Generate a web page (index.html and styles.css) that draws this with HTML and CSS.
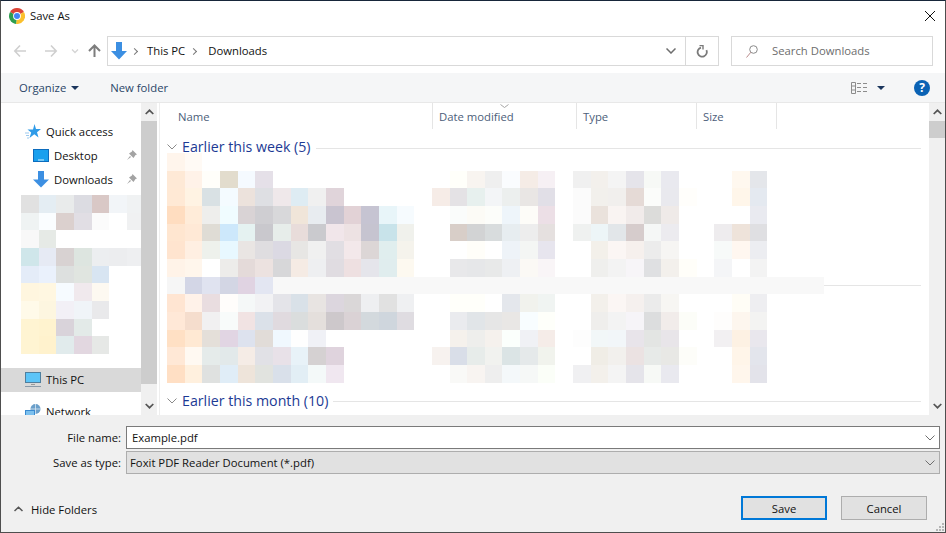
FILE: index.html
```html
<!DOCTYPE html>
<html lang="en">
<head>
    <meta charset="UTF-8">
    <title>Save As</title>
    <link rel="stylesheet" href="styles.css">
</head>

<body>
<div class="window">

    <header class="titlebar">
        <svg class="app-icon" width="16" height="16" viewBox="0 0 16 16">
            <path d="M8 8L1.07 4A8 8 0 0 1 14.93 4Z" fill="#db4437"/>
            <path d="M8 8L14.93 4A8 8 0 0 1 7 15.94Z" fill="#fbc02d"/>
            <path d="M8 8L7 15.94A8 8 0 0 1 1.07 4Z" fill="#2e9e4f"/>
            <circle cx="8" cy="8" r="3.9" fill="#fff"/>
            <circle cx="8" cy="8" r="3" fill="#4285f4"/>
        </svg>
        <span class="title">Save As</span>
        <svg class="close-icon" width="10" height="10" viewBox="0 0 10 10">
            <path d="M0 0L10 10M10 0L0 10" stroke="#111" stroke-width="1" fill="none"/>
        </svg>
    </header>

    <div class="navbar">
        <svg class="nav-arrows" width="100" height="30" viewBox="0 0 100 30" fill="none">
            <path d="M8 15H19M13 9.500L7.800 15L13 20.500" stroke="#cfcfcf" stroke-width="1.600"/>
            <path d="M38 15H49M44 9.500L49.200 15L44 20.500" stroke="#cfcfcf" stroke-width="1.600"/>
            <path d="M65 13.500L68 16.500L71 13.500" stroke="#d4d4d4" stroke-width="1.300"/>
            <path d="M87.500 21V10M82 15L87.500 9.500L93 15" stroke="#7d7d7d" stroke-width="2"/>
        </svg>
        <div class="address">
            <svg class="addr-icon" width="16" height="18" viewBox="0 0 16 18">
                <path d="M5 0H11V9H16L8 17.500L0 9H5Z" fill="#3c8fe2"/>
            </svg>
            <span class="crumb-sep"></span>
            <span class="crumb">This PC</span>
            <span class="crumb-sep"></span>
            <span class="crumb">Downloads</span>
            <svg class="addr-chevron" width="10" height="6" viewBox="0 0 10 6" fill="none">
                <path d="M0.500 0.500L5 5L9.500 0.500" stroke="#6e6e6e" stroke-width="1.500"/>
            </svg>
            <div class="refresh">
                <svg width="12" height="13" viewBox="0 0 12 13" fill="none">
                    <path d="M3 3.500A4.600 4.600 0 1 0 9 3.500" stroke="#7a7a7a" stroke-width="1.800" transform="rotate(25 6 7.500)"/>
                    <path d="M3.500 0.500L7 0.500L7 4.500" stroke="#7a7a7a" stroke-width="1.400"/>
                </svg>
            </div>
        </div>
        <div class="search">
            <svg width="12" height="13" viewBox="0 0 12 13" fill="none">
                <circle cx="7.500" cy="4.500" r="3.800" stroke="#8a8a8a"/>
                <path d="M4.800 7.300L0.500 12.500" stroke="#b98a8a"/>
            </svg>
            <span>Search Downloads</span>
        </div>
    </div>

    <div class="toolbar">
        <span class="tool">Organize</span>
        <span class="caret"></span>
        <span class="tool new-folder">New folder</span>
        <svg class="view-icon" width="16" height="12" viewBox="0 0 16 12" fill="none">
            <path d="M0.500 0.500H4.500V11.500H0.500ZM0.500 4H4.500M0.500 8H4.500" stroke="#8c8c8c"/>
            <path d="M6 1.500H10M12 1.500H16M6 5.500H10M12 5.500H16M6 9.500H10M12 9.500H16" stroke="#8c8c8c"/>
        </svg>
        <span class="caret view-caret"></span>
        <span class="help">?</span>
    </div>

    <main class="panes">
        <nav class="sidebar">
            <div class="side-item side-top">
                <svg width="16" height="15" viewBox="0 0 16 15">
                    <path d="M9.500 0L11 5H16L12 8.200L13.500 13.500L9.300 10.300L4.500 14L6.200 8.500L2.500 5.500H8Z" fill="#2f9be8"/>
                    <path d="M0 9H4M1 11.500H4M2 14H4" stroke="#9cc9ee" stroke-width="1"/>
                </svg>
                <span>Quick access</span>
            </div>
            <div class="side-item side-sub">
                <svg width="16" height="13" viewBox="0 0 16 13">
                    <rect x="0.500" y="0.500" width="15" height="12" fill="#19a0ee" stroke="#0c6cbd"/>
                    <path d="M5 11H11" stroke="#d5eefc"/>
                </svg>
                <span>Desktop</span>
                <svg class="pin" width="10" height="10" viewBox="0 0 10 10">
                    <path d="M5.500 0L10 4.500L8.500 5L6.500 8L2 3.500L5 1.500ZM3 6L0 10L4 7Z" fill="#a3a3a3"/>
                </svg>
            </div>
            <div class="side-item side-sub">
                <svg width="16" height="17" viewBox="0 0 16 17">
                    <path d="M5 0H11V8.500H16L8 16.500L0 8.500H5Z" fill="#3c8fe2"/>
                </svg>
                <span>Downloads</span>
                <svg class="pin" width="10" height="10" viewBox="0 0 10 10">
                    <path d="M5.500 0L10 4.500L8.500 5L6.500 8L2 3.500L5 1.500ZM3 6L0 10L4 7Z" fill="#a3a3a3"/>
                </svg>
            </div>
            <div class="mosaic mosaic-side" id="sideMosaic"></div>
            <div class="side-item side-top side-active">
                <svg width="16" height="15" viewBox="0 0 16 15">
                    <rect x="0.500" y="0.500" width="15" height="10" fill="#5cc4f7" stroke="#4f7f9e"/>
                    <path d="M0 14.500H16" stroke="#8a9aa8"/>
                    <path d="M6 12.500H10" stroke="#9a9a9a"/>
                </svg>
                <span>This PC</span>
            </div>
            <div class="side-item side-top side-network">
                <svg width="16" height="16" viewBox="0 0 16 16">
                    <circle cx="10.500" cy="5" r="5" fill="#6a9fca"/>
                    <path d="M10.500 0V10M5.500 5H15.500" stroke="#dbe8f2" stroke-width="0.800"/>
                    <rect x="0" y="6" width="10" height="7" fill="#3a8ad0"/>
                    <rect x="1" y="7" width="8" height="5" fill="#7cc0ee"/>
                </svg>
                <span>Network</span>
            </div>
        </nav>

        <div class="scrollbar">
            <div class="sb-btn">
                <svg width="9" height="6" viewBox="0 0 9 6" fill="none"><path d="M0.700 5L4.500 1.300L8.300 5" stroke="#555" stroke-width="1.700"/></svg>
            </div>
            <div class="sb-thumb sb-thumb-side"></div>
            <div class="sb-track"></div>
            <div class="sb-btn">
                <svg width="9" height="6" viewBox="0 0 9 6" fill="none"><path d="M0.700 1L4.500 4.700L8.300 1" stroke="#555" stroke-width="1.700"/></svg>
            </div>
        </div>

        <section class="files">
            <div class="columns">
                <div class="col col-name">Name</div>
                <div class="col col-date">Date modified
                    <svg class="sort" width="9" height="4" viewBox="0 0 9 4" fill="none"><path d="M0.500 0.500L4.500 3.500L8.500 0.500" stroke="#a5a5a5"/></svg>
                </div>
                <div class="col col-type">Type</div>
                <div class="col col-size">Size</div>
            </div>

            <div class="group group-first">
                <svg width="10" height="6" viewBox="0 0 10 6" fill="none"><path d="M0.500 0.500L5 5L9.500 0.500" stroke="#8a8a8a"/></svg>
                <span>Earlier this week (5)</span>
                <i></i>
            </div>
            <div class="mosaic-wrap">
                <div class="mosaic mosaic-files" id="fileMosaic">
                    <div class="mosaic-strip"></div>
                </div>
                <div class="strip-line"></div>
            </div>
            <div class="group group-next">
                <svg width="10" height="6" viewBox="0 0 10 6" fill="none"><path d="M0.500 0.500L5 5L9.500 0.500" stroke="#8a8a8a"/></svg>
                <span>Earlier this month (10)</span>
                <i></i>
            </div>
        </section>

        <div class="scrollbar">
            <div class="sb-btn">
                <svg width="9" height="6" viewBox="0 0 9 6" fill="none"><path d="M0.700 5L4.500 1.300L8.300 5" stroke="#555" stroke-width="1.700"/></svg>
            </div>
            <div class="sb-thumb sb-thumb-files"></div>
            <div class="sb-track"></div>
            <div class="sb-btn">
                <svg width="9" height="6" viewBox="0 0 9 6" fill="none"><path d="M0.700 1L4.500 4.700L8.300 1" stroke="#555" stroke-width="1.700"/></svg>
            </div>
        </div>
    </main>

    <footer class="footer">
        <div class="form">
            <label>File name:</label>
            <div class="field field-input">
                <span>Example.pdf</span>
                <svg width="10" height="6" viewBox="0 0 10 6" fill="none"><path d="M0.500 0.500L5 5L9.500 0.500" stroke="#6e6e6e"/></svg>
            </div>
            <label>Save as type:</label>
            <div class="field field-select">
                <span>Foxit PDF Reader Document (*.pdf)</span>
                <svg width="10" height="6" viewBox="0 0 10 6" fill="none"><path d="M0.500 0.500L5 5L9.500 0.500" stroke="#6e6e6e"/></svg>
            </div>
        </div>
        <div class="actions">
            <div class="hide-folders">
                <svg width="9" height="6" viewBox="0 0 9 6" fill="none"><path d="M0.500 5L4.500 1.200L8.500 5" stroke="#555" stroke-width="1.500"/></svg>
                <span>Hide Folders</span>
            </div>
            <button class="btn btn-default">Save</button>
            <button class="btn">Cancel</button>
        </div>
        <svg class="grip" width="8" height="8" viewBox="0 0 8 8" fill="#b5b5b5">
            <rect x="6" y="0" width="2" height="2"/>
            <rect x="3" y="3" width="2" height="2"/>
            <rect x="6" y="3" width="2" height="2"/>
            <rect x="0" y="6" width="2" height="2"/>
            <rect x="3" y="6" width="2" height="2"/>
            <rect x="6" y="6" width="2" height="2"/>
        </svg>
    </footer>
</div>
<script src="mosaic.js"></script>
</body>
</html>
```

FILE: styles.css
```css
* { box-sizing: border-box; }

html, body { margin: 0; padding: 0; }

body {
    width: 946px;
    height: 533px;
    overflow: hidden;
    font-family: "Open Sans", "Noto Sans", sans-serif;
    font-size: 11.3px;
    color: #111;
    background: #fff;
}

.window {
    display: flex;
    flex-direction: column;
    width: 946px;
    height: 533px;
    border: 1px solid #4e4e4e;
    border-top-color: #17263a;
    background: #fff;
}

/* title bar */
.titlebar {
    display: flex;
    align-items: center;
    height: 29px;
    flex: none;
    padding: 0 10px 0 8px;
}
.title { margin-left: 5px; }
.close-icon { margin-left: auto; }

/* address row */
.navbar {
    display: flex;
    height: 43px;
    flex: none;
    padding: 6px 12px 7px 6px;
}
.nav-arrows { flex: none; }

.address {
    display: flex;
    align-items: center;
    width: 612px;
    height: 30px;
    flex: none;
    padding-left: 3px;
    border: 1px solid #d9d9d9;
}
.crumb { margin-bottom: 2px; }
.crumb-sep {
    width: 5px;
    height: 5px;
    margin: 0 12px 0 6px;
    border-top: 1px solid #777;
    border-right: 1px solid #777;
    transform: rotate(45deg);
}
.addr-icon + .crumb-sep { margin: 0 10px 0 5px; }
.addr-chevron { margin-left: auto; margin-right: 9px; }
.refresh {
    display: flex;
    align-items: center;
    justify-content: center;
    width: 33px;
    height: 100%;
    border-left: 1px solid #d9d9d9;
}

.search {
    display: flex;
    align-items: center;
    width: 202px;
    height: 30px;
    flex: none;
    margin-left: 12px;
    padding-left: 14px;
    gap: 14px;
    border: 1px solid #d9d9d9;
    color: #6d6d6d;
}
.search span { margin-bottom: 2px; }

/* toolbar */
.toolbar {
    display: flex;
    align-items: center;
    height: 30px;
    flex: none;
    padding: 0 15px 0 18px;
    background: #f5f6f7;
    border-bottom: 1px solid #e8e8e8;
}
.tool { color: #2b4668; }
.caret {
    width: 0;
    height: 0;
    margin-left: 5px;
    border-left: 4px solid transparent;
    border-right: 4px solid transparent;
    border-top: 4px solid #1b365d;
}
.new-folder { margin-left: 31px; }
.view-icon { margin-left: auto; }
.view-caret { margin-left: 10px; }
.help {
    width: 16px;
    height: 16px;
    margin-left: 29px;
    border-radius: 50%;
    background: #0a62b4;
    color: #fff;
    font-weight: bold;
    font-size: 12px;
    line-height: 16px;
    text-align: center;
}

/* main panes */
.panes {
    display: flex;
    height: 312px;
    flex: none;
    overflow: hidden;
}

.sidebar {
    width: 140px;
    flex: none;
    padding-top: 16px;
    overflow: hidden;
}
.side-item {
    display: flex;
    align-items: center;
    height: 24px;
    gap: 5px;
}
.side-top { padding-left: 24px; }
.side-sub { padding-left: 32px; }
.side-active {
    margin-top: 14px;
    background: #d9d9d9;
}
.side-network { margin-top: 8px; }
.pin { margin-left: auto; margin-right: 4px; }

.scrollbar {
    display: flex;
    flex-direction: column;
    width: 16px;
    flex: none;
    background: #f0f0f0;
}
.sb-btn {
    display: flex;
    align-items: center;
    justify-content: center;
    height: 18px;
    flex: none;
}
.sb-thumb { flex: none; background: #cdcdcd; }
.sb-thumb-side { height: 263px; }
.sb-thumb-files { height: 17px; }
.sb-track { flex: 1; }

/* file list */
.files {
    flex: 1;
    min-width: 0;
    margin-left: 2px;
    border-left: 1px solid #eee;
    padding-left: 7px;
    overflow: hidden;
}
.columns {
    display: flex;
    height: 26px;
    padding-left: 4px;
}
.col {
    position: relative;
    padding-left: 6px;
    border-right: 1px solid #e5e5e5;
    color: #4c607a;
    line-height: 27px;
}
.col-name { width: 262px; padding-left: 7px; }
.col-date { width: 144px; }
.col-type { width: 120px; }
.col-size { width: 80px; }
.sort {
    position: absolute;
    top: 1px;
    left: 67px;
}

.group {
    display: flex;
    align-items: center;
    height: 14px;
    width: 754px;
    color: #1c3a94;
    font-size: 14.2px;
    line-height: 18px;
}
.group span { margin-left: 5px; white-space: nowrap; }
.group i {
    flex: 1;
    height: 1px;
    margin: 2px 0 0 5px;
    background: #e5e5e5;
}
.group-first { margin-top: 11px; }
.group-next { margin-top: 11px; }

.mosaic-wrap { position: relative; margin-top: -1px; }
.mosaic { display: grid; grid-auto-rows: 17.67px; }
.mosaic-files { grid-template-columns: repeat(37, 17.67px) 3.3px; }
.mosaic-side {
    grid-template-columns: repeat(7, 17.67px);
    margin: 4px 0 0 20px;
}
.mosaic-strip {
    grid-row: 8;
    grid-column: 7 / -1;
    background: #f8f8f8;
}
.strip-line {
    position: absolute;
    top: 132px;
    left: 657px;
    width: 97px;
    height: 1px;
    background: #e5e5e5;
}

/* bottom form */
.footer {
    position: relative;
    flex: 1;
    padding: 11px 5px 0 0;
    background: #f0f0f0;
}
.form {
    display: grid;
    grid-template-columns: 120px 1fr;
    grid-auto-rows: 23px;
    column-gap: 5px;
    row-gap: 2px;
    align-items: center;
}
.form label { text-align: right; }
.field {
    display: flex;
    align-items: center;
    justify-content: space-between;
    height: 23px;
    padding: 0 4px 0 5px;
    border: 1px solid #7a7a7a;
}
.field-input { background: #fff; }
.field-select {
    padding-left: 3px;
    background: #e1e1e1;
    border-color: #adadad;
}

.actions {
    display: flex;
    align-items: center;
    margin-top: 22px;
    padding-right: 13px;
}
.hide-folders {
    display: flex;
    align-items: center;
    gap: 8px;
    margin-left: 13px;
    margin-right: auto;
    padding-top: 2px;
}
.btn {
    width: 86px;
    height: 24px;
    margin-left: 14px;
    padding: 0;
    border: 1px solid #adadad;
    background: #e1e1e1;
    color: #111;
    font: inherit;
}
.btn-default { border: 2px solid #0078d7; }
.grip {
    position: absolute;
    right: 1px;
    bottom: 1px;
}
```

FILE: mosaic.js
```js
// blurred thumbnails, each row is "startColumn:hex,hex,..." runs
var fileRows = [
  "0:fff5ec,fffaf5",
  "0:fee9d6,fff2e8,fffefa,e2dccd,f5faff,e5e0e8 16:fffffa,f8f4f0,efefef,fafcfe,f5ece6,f6f0f4 23:f0f0f0,f3f0ec,f4f4f4,e5e4ea,f7f9f6,e9e9ef 32:fff8ef,e4e6ea",
  "0:ffe9d5,fff3e3,d9e1e4,f4fbff,ece2dc,dedfe3,efe8ea,deecf3,f0f0f0,e0d4da 15:f6ece7,e4e2e5,e7f0ee,f3f5f7,ecefee,e9e6e4,e1dfe7 23:fbfbfb,f2f0ec,f1efed,e5dad6,fbfcfa,e9e9ee,fffefb 32:fff6ea,e4e9f0",
  "0:ffddc0,ffecd9,eeeeec,f0fcff,d9d3d5,cfced2,d8d8da,f0e5d9,e8ecf0,c9c4d0,e2d2d6,c6c4d2,e8f5f9,f6fbfe 16:fafcfb,fcfbf6,fcfdfa,eef5fa,fdfcf8,ecdfe6 23:fbfbfb,eae2dc,f9f4f2,f1ebea,dcdcda,efeae8 33:e9eaf0",
  "0:ffe6d0,ffe9d6,dfdcd5,cde8fb,e5f2f1,c9c8cd,e7edea,e8dcda,cacace,f1e6ea,ede2e3,c6c4d0,c8e3ea,f0f1ec 16:d8cec8,d2d3d4,d8dcdd,e7edf0,ededed,e5e0df 23:eff1f0,edf5f7,e2e6e9,d6cccc,f5f7f6,ecebef 31:eeecee,eee3da,dfdfe2",
  "0:ffe4cf,ffefe2,eef1ec,e8f8ff,e9e5e3,dfdde0,dbd9e3,e7e6e4,f0f0f0,e1dee3,f3e8ea,dcd6d6,e0eeee,f5f3ec 17:fffef9 19:eef3f8,f4f6f4,e7e5ee 24:f3f0ea,fbf6f4,f6f0ed,ececec,f6f5f3 31:f7faf9,fff7f0,ecedf1",
  "0:fff3e8,fff6ec,ffffff,edecea,e4dad9,ece2e0,d7d7d9,f5ebe4,eeeff1,e0dce1,eee0e1,e5e5eb,e0edee,fdf9f0 16:e8e8ea,e6e7e9,e8e9e9,eef0f3,fbf9f5,f9f5f7 24:efefed,f3f3f3,f7f5f8,dfe0e2,f3f0ec,fffef9 31:f4f5f7 33:f3f3f3",
  "0:f6f6f6,d3d6e6,e0e3f0,d3d6e4,e0d3e2,e3e6f2",
  "0:ffe5d2,fff2e9,e9dde0,fffdfb,f5f8f8,f2f2f4,e4e4e9,d9e1e8,e8e4e2,dcd6de,dad7d8,eeeff1,e1e1e1,eff0f2 16:fffffa,fffffa 19:e4e7ec,f1f2ed,f0f4f2 24:f3f0eb,fbf6f4,f5f0ee,ebebeb,f7f6f3 32:fffdf6,eeeef1",
  "0:ffe8d7,f5ddcd,f1f0f1,f8fbfa,f1e3e3,dbe1e9,e0dadf,dadddd,e4dfdc,cdc8cb,dad2d5,d3d9dd,cfd6dd,dfdce1 16:eaebee,e1e5e8,e6e6e6,e9e7e5,f8fdff,fefffa 24:efeeec,f3f3f3,f6f4f8,dcddde,f1ecea,fcfdf8 31:fefdfc,fdf6ee,f3f3f2",
  "0:ffe0c4,ffe9d3,e4dfd9,e1d5e3,dde2ee,e1dcd8,f0f8fe,fefefe,f0f1f6 16:f5f1ec,eeeeec,f5f1ed,fbfffc,f0f1f5,f5ece8 23:fdfdfd,f2f7f8,f2f6f9,e8e4ea,e3e5e3,e8e5e9 31:f2f0f2,fdf1e3,e9e7ed",
  "0:ffe8d6,fff9f2,e5ebea,e2e9ea,f5ece6,e1e1e6,e8e1e8,e8f2f8,d5d1d2,dfd3dd 15:f7f2ef,d9dee8,e7ecea,f1f2ef,dbe4e5,e5e9ea,f1f3ed 24:f0ede6,f2f0ed,ebe2e2,e7eae8,e8e8e5,fdfdf9 32:fff5e9,e3e5ec",
  "0:ffdfc4,fff0de,dfe1e0,e0edf7,eee4da,e1e3df,d9e0ea,e2eef5,f4f9f9,f0e7f0 16:f9f9f7,f8f4f1,eeeeee,f4f8fa,f6f8f7,fbfef8 23:f0f0f2,f3f0eb,f4f4f4,e5e4ea,f7f9f6,e9e9ef 32:fff6ec,e3e3ea"
];

var sideRows = [
  "0:e1e1e1,e4edf3,e9ebeb,dcdce2,d9c8c6,f2f5f8,f0f2f3",
  "0:eff3f3,fafdff,dbd0ce,e1dee4,fbfbfb,ffffff,f0f1f2",
  "0:f8f8f8,e6eae6",
  "0:cfe6ea,e6eaf4,d8d2d2,dde5e0,eceef0,ecedef,eeeff1",
  "0:e4ecf8,eaf1fc,dde0df,e0e5e0,d8e5f2",
  "0:fff6df,fff7e1,f6fbff,f0e9ed,fdf9f1",
  "0:fffae9,fdf6e0,f2f0f6,f0f4f8,e9e9eb",
  "0:fff4d2,fff3cf,d9d3da,e3eae8",
  "0:fff4d2,fff2cd,e1ebec,e2d7e0,e6e8e6"
];

function drawMosaic(id, rows) {
  var box = document.getElementById(id);
  rows.forEach(function (row, r) {
    row.split(" ").forEach(function (run) {
      var parts = run.split(":");
      parts[1].split(",").forEach(function (hex, i) {
        var cell = document.createElement("div");
        cell.style.gridRow = r + 1;
        cell.style.gridColumn = parseInt(parts[0]) + i + 1;
        cell.style.background = "#" + hex;
        box.appendChild(cell);
      });
    });
  });
}

drawMosaic("fileMosaic", fileRows);
drawMosaic("sideMosaic", sideRows);
```
